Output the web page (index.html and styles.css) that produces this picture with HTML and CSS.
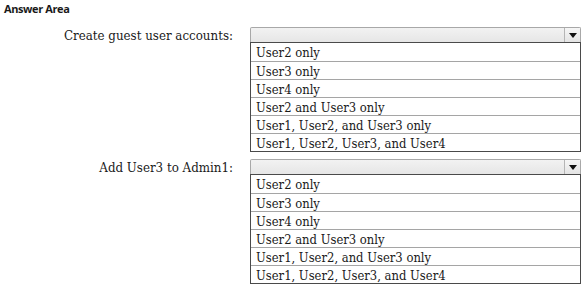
FILE: index.html
```html
<!DOCTYPE html>
<html>
<head>
<meta charset="utf-8">
<link rel="stylesheet" href="styles.css">
</head>
<body>
<div class="page">
  <div class="title">Answer Area</div>
  <div class="question">
    <div class="label">Create guest user accounts:</div>
    <div class="dropdown">
      <div class="select"><span class="btn"><svg width="8" height="5" viewBox="0 0 8 5"><path d="M0 0H8L4 5Z" fill="#111"/></svg></span></div>
      <ul class="options">
        <li>User2 only</li>
        <li>User3 only</li>
        <li>User4 only</li>
        <li>User2 and User3 only</li>
        <li>User1, User2, and User3 only</li>
        <li>User1, User2, User3, and User4</li>
      </ul>
    </div>
  </div>
  <div class="question">
    <div class="label">Add User3 to Admin1:</div>
    <div class="dropdown">
      <div class="select"><span class="btn"><svg width="8" height="5" viewBox="0 0 8 5"><path d="M0 0H8L4 5Z" fill="#111"/></svg></span></div>
      <ul class="options">
        <li>User2 only</li>
        <li>User3 only</li>
        <li>User4 only</li>
        <li>User2 and User3 only</li>
        <li>User1, User2, and User3 only</li>
        <li>User1, User2, User3, and User4</li>
      </ul>
    </div>
  </div>
</div>
</body>
</html>
```
FILE: styles.css
```css
html, body {
  margin: 0;
  padding: 0;
  background: #fff;
}
.page {
  padding: 2px 0 0 4px;
  color: #1a1a1a;
}
.title {
  font-family: "Open Sans", sans-serif;
  font-weight: 700;
  font-size: 11px;
  letter-spacing: -0.4px;
  line-height: 14px;
  height: 25px;
}
.question {
  display: grid;
  grid-template-columns: 229px 331px;
  column-gap: 17px;
  margin-bottom: 7px;
}
.label {
  font-family: "DejaVu Serif Condensed", "DejaVu Serif", serif;
  font-stretch: condensed;
  font-size: 13.2px;
  text-align: right;
  line-height: 17px;
}
.dropdown {
  display: flex;
  flex-direction: column;
}
.select {
  height: 14px;
  border: 1px solid #a8a8a8;
  border-bottom: none;
  border-radius: 2px 2px 0 0;
  background: linear-gradient(#f2f2f2, #e6e6e6);
  display: flex;
  justify-content: flex-end;
}
.btn {
  width: 15px;
  height: 14px;
  border-left: 1px solid #b5b5b5;
  display: flex;
  align-items: center;
  justify-content: center;
  background: linear-gradient(#f6f6f6, #e4e4e4);
}
.options {
  list-style: none;
  margin: 0;
  padding: 0;
  border: 1px solid #4a4a4a;
  font-family: "DejaVu Serif Condensed", "DejaVu Serif", serif;
  font-stretch: condensed;
  font-size: 12.9px;
}
.options li {
  height: 17px;
  line-height: 19px;
  padding-left: 5px;
  border-top: 1px solid #a5a5a5;
  color: #1a1a1a;
}
.options li:first-child {
  border-top: none;
  height: 18px;
}
```
